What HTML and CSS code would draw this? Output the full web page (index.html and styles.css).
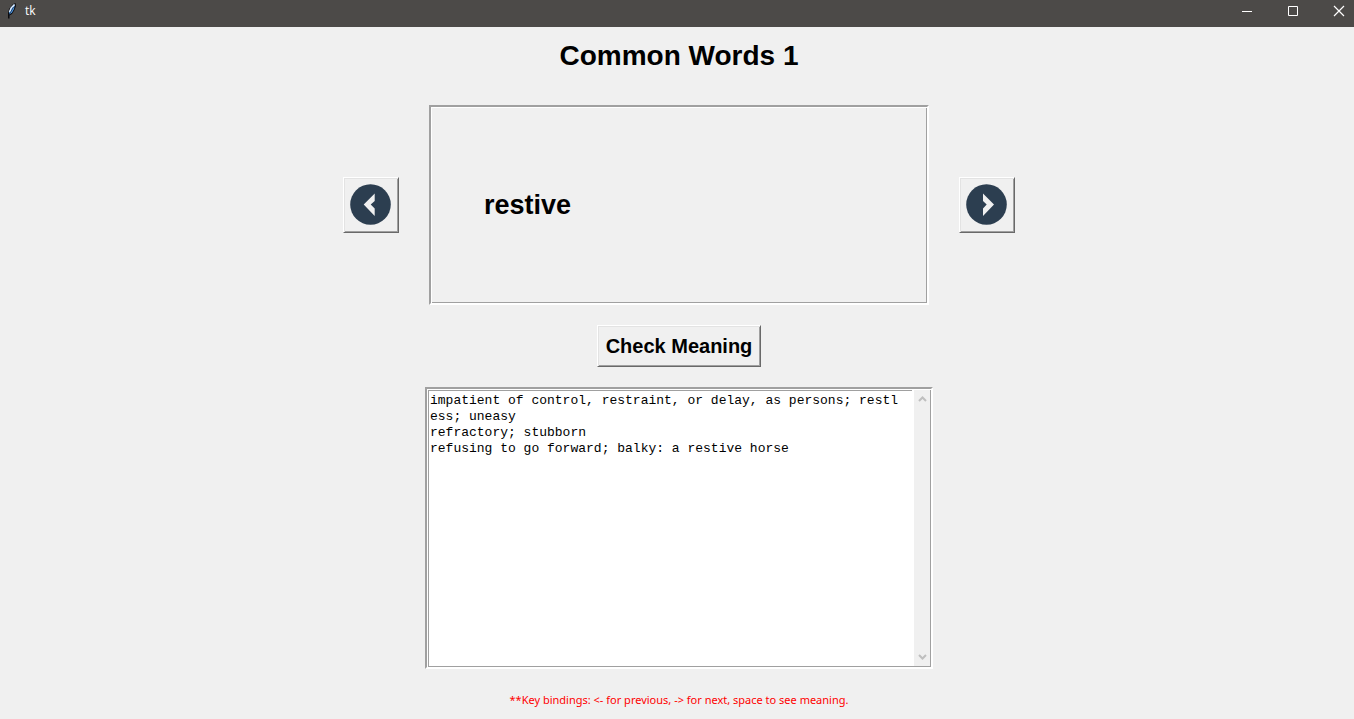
FILE: index.html
```html
<!DOCTYPE html>
<html lang="en">
<head>
<meta charset="utf-8">
<title>tk</title>
<link rel="stylesheet" href="styles.css">
</head>
<body>
<header class="titlebar">
  <svg class="feather" width="16" height="16" viewBox="0 0 16 16" aria-hidden="true">
    <path d="M11.500 0L8.500 1.500L5 6L4 10.500V15.500H5.500V12.500L8 11L10.500 7L12 3Z" fill="#0b0b0f"/>
    <path d="M10.800 1.200L7.500 4L5 9L5.500 11.500L8 9.500L10 6Z" fill="#4f97e0"/>
    <path d="M10.500 1.500L7.200 5L5.500 9" fill="none" stroke="#dcecff" stroke-width="1.500"/>
    <path d="M9.500 4L5 12" stroke="#10203a" stroke-width="0.700"/>
  </svg>
  <span class="titlebar-name">tk</span>
  <div class="window-controls">
    <button class="window-button" type="button" aria-label="Minimize">
      <svg width="12" height="12" viewBox="0 0 12 12"><path d="M1 6.500H11" stroke="#fff"/></svg>
    </button>
    <button class="window-button" type="button" aria-label="Maximize">
      <svg width="12" height="12" viewBox="0 0 12 12"><path d="M1.500 1.500H10.500V10.500H1.500Z" fill="none" stroke="#fff"/></svg>
    </button>
    <button class="window-button" type="button" aria-label="Close">
      <svg width="12" height="12" viewBox="0 0 12 12"><path d="M1 1L11 11M11 1L1 11" stroke="#fff" stroke-width="1.200"/></svg>
    </button>
  </div>
</header>
<main class="content">
  <h1 class="heading">Common Words 1</h1>
  <div class="card-row">
    <button class="raised arrow-button" type="button" aria-label="Previous">
      <svg width="42" height="42" viewBox="0 0 42 42"><circle cx="20.500" cy="20.500" r="20.300" fill="#2c3e50"/><path d="M24.700 9.500L13.700 20.600L24.700 32V24.500L20.700 20.600L24.700 17Z" fill="#f0f0f0"/></svg>
    </button>
    <section class="groove card"><p class="word">restive</p></section>
    <button class="raised arrow-button" type="button" aria-label="Next">
      <svg width="42" height="42" viewBox="0 0 42 42"><circle cx="20.500" cy="20.500" r="20.300" fill="#2c3e50"/><path d="M17 9.500L28 20.600L17 32V24.500L20.700 20.600L17 17Z" fill="#f0f0f0"/></svg>
    </button>
  </div>
  <button class="raised check-button" type="button">Check Meaning</button>
  <div class="groove meaning">
    <textarea class="meaning-text" aria-label="Meaning" spellcheck="false">impatient of control, restraint, or delay, as persons; restless; uneasy
refractory; stubborn
refusing to go forward; balky: a restive horse</textarea>
    <div class="scrollbar">
      <svg width="9" height="8" viewBox="0 0 9 8"><path d="M1 6L4.500 2.500L8 6" fill="none" stroke="#bfbfbf" stroke-width="2"/></svg>
      <svg width="9" height="8" viewBox="0 0 9 8"><path d="M1 2L4.500 5.500L8 2" fill="none" stroke="#bfbfbf" stroke-width="2"/></svg>
    </div>
  </div>
  <p class="hint">**Key bindings: &lt;- for previous, -&gt; for next, space to see meaning.</p>
</main>
</body>
</html>
```
FILE: styles.css
```css
* {
  box-sizing: border-box;
}

body {
  margin: 0;
  min-height: 100vh;
  background: #f0f0f0;
  color: #000;
  font-family: "Liberation Sans", Arial, sans-serif;
}

svg {
  display: block;
}

.titlebar {
  display: flex;
  align-items: center;
  height: 27px;
  padding: 0 0 5px 4px;
  background: #4c4a48;
  color: #fff;
}

.titlebar-name {
  margin-left: 5px;
  font: 12px/16px "Open Sans", sans-serif;
}

.window-controls {
  display: flex;
  gap: 22px;
  margin-left: auto;
  padding-right: 3px;
}

.window-button {
  display: flex;
  justify-content: center;
  align-items: center;
  width: 24px;
  height: 22px;
  padding: 0;
  border: 0;
  background: transparent;
}

.content {
  display: flex;
  flex-direction: column;
  align-items: center;
  padding: 13px 0 8px 4px;
}

.heading {
  margin: 0 0 33px;
  font-size: 28px;
  line-height: 32px;
}

.card-row {
  display: flex;
  align-items: center;
  gap: 30px;
  margin-bottom: 20px;
}

.raised {
  border: 1px solid;
  border-color: #fff #696969 #696969 #fff;
  background: #f0f0f0;
  box-shadow: inset 1px 1px #e3e3e3, inset -1px -1px #a0a0a0;
}

.groove {
  border: 2px solid;
  border-color: #a0a0a0 #fff #fff #a0a0a0;
  box-shadow: inset 1px 1px #fff, inset -1px -1px #a0a0a0;
}

.arrow-button {
  display: grid;
  place-items: center;
  width: 56px;
  height: 56px;
  padding: 0;
}

.card {
  display: flex;
  align-items: center;
  width: 500px;
  height: 200px;
  padding: 0 53px;
}

.word {
  margin: 0;
  font-size: 27px;
  font-weight: bold;
  line-height: 32px;
}

.check-button {
  width: 164px;
  height: 42px;
  margin-bottom: 20px;
  padding: 0;
  color: #000;
  font: bold 20px/24px "Liberation Sans", Arial, sans-serif;
}

.meaning {
  display: flex;
  width: 508px;
  height: 282px;
  padding: 1px;
  background: #fff;
}

.meaning-text {
  flex: 1;
  min-width: 0;
  margin-right: 2px;
  padding: 2px 10px 0 1px;
  border: 0 solid #a0a0a0;
  border-width: 1px 0 0 1px;
  outline: 0;
  background: #fff;
  color: #000;
  font: 13px/16px "Liberation Mono", "Courier New", monospace;
  word-break: break-all;
  overflow: hidden;
  resize: none;
}

.scrollbar {
  display: flex;
  flex-direction: column;
  align-items: center;
  justify-content: space-between;
  width: 16px;
  padding: 5px 0;
  background: #f0f0f0;
}

.hint {
  margin: 22px 0 0;
  color: #f00;
  font: 11px/18px "Noto Sans", sans-serif;
}
```
